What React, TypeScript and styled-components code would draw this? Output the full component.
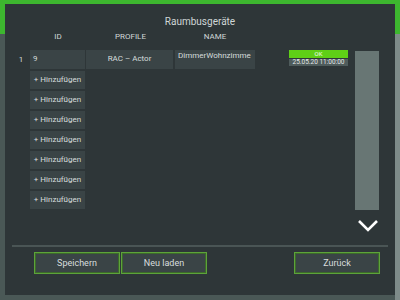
import styled, { createGlobalStyle } from "styled-components"

const GlobalStyle = createGlobalStyle`
    html, body {
        margin: 0;
        padding: 0;
        width: 400px;
        height: 300px;
        overflow: hidden;
        font-family: Roboto, "Liberation Sans", sans-serif;
    }
`

const Page = styled.div`
    position: relative;
    width: 400px;
    height: 300px;
    display: flex;
    flex-direction: column;
    background: #4a5856;
`

const PageHeader = styled.div`
    height: 34px;
    background: #3db72f;
`

const PageBody = styled.div`
    flex: 1;
    display: flex;
    justify-content: flex-end;
`

const PageScroll = styled.div`
    width: 5px;
    background: #7e8b89;
`

const Dialog = styled.div`
    position: absolute;
    left: 5px;
    top: 4px;
    right: 5px;
    bottom: 5px;
    background: #2e3638;
    display: flex;
    flex-direction: column;
    padding: 0 7px;
    color: #d2d9d9;
`

const Title = styled.div`
    margin-top: 11px;
    height: 14px;
    line-height: 14px;
    font-size: 10px;
    text-align: center;
    color: #d0d7d7;
`

const Table = styled.div`
    display: grid;
    grid-template-columns: 18px 56px 89px 80px 34px 59px 7px 24px;
    grid-template-rows: 16px 19px repeat(7, 18px);
    row-gap: 2px;
    margin-top: 3px;
`

const HeadCell = styled.div<{ $col: number }>`
    grid-column: ${p => p.$col};
    grid-row: 1;
    font-size: 8px;
    line-height: 16px;
    text-align: center;
    color: #d0d7d7;
    margin-top: -3px;
`

const RowNum = styled.div`
    grid-column: 1;
    grid-row: 2;
    font-size: 8px;
    line-height: 19px;
    text-align: center;
`

const Cell = styled.div<{ $col: number; $row: number; $w: number; $align?: string; $top?: boolean }>`
    grid-column: ${p => p.$col};
    grid-row: ${p => p.$row};
    width: ${p => p.$w}px;
    background: #3a4446;
    font-size: 8px;
    line-height: ${p => (p.$top ? "12px" : "18px")};
    text-align: ${p => p.$align || "center"};
    padding: 0 3px;
    box-sizing: border-box;
    white-space: nowrap;
    overflow: hidden;
    color: #d6dddd;
`

const Status = styled.div`
    grid-column: 6;
    grid-row: 2;
    display: flex;
    flex-direction: column;
    gap: 1px;
`

const OkBadge = styled.div`
    height: 8px;
    background: #5fcf16;
    color: #f0fff0;
    font-size: 6px;
    line-height: 8px;
    text-align: center;
`

const DateBar = styled.div`
    height: 7px;
    background: #4f5c5c;
    color: #e4eaea;
    font-size: 6.5px;
    line-height: 7px;
    text-align: center;
`

const ScrollTrack = styled.div`
    grid-column: 8;
    grid-row: 2 / span 8;
    margin-top: 1px;
    margin-bottom: -1px;
    background: #687674;
`

const ChevronRow = styled.div`
    display: flex;
    justify-content: flex-end;
    padding-right: 9px;
    margin-top: 10px;
    height: 12px;
`

const Divider = styled.div`
    margin-top: 14px;
    height: 2px;
    background: #4a5555;
`

const ButtonRow = styled.div`
    display: flex;
    margin-top: 5px;
    padding: 0 8px 0 22px;
    gap: 1px;
`

const Button = styled.button<{ $push?: boolean }>`
    width: 86px;
    height: 22px;
    margin-left: ${p => (p.$push ? "auto" : "0")};
    background: #3a4446;
    border: 1px solid #5da33a;
    box-shadow: inset 0 0 0 1px #3c6a2a;
    color: #d8dede;
    font-family: Roboto, "Liberation Sans", sans-serif;
    font-size: 9px;
    padding: 0;
`

function App() {
    const addRows = [3, 4, 5, 6, 7, 8, 9]

    return (
        <>
            <GlobalStyle />
            <Page>
                <PageHeader />
                <PageBody>
                    <PageScroll />
                </PageBody>
                <Dialog>
                    <Title>Raumbusgeräte</Title>
                    <Table>
                        <HeadCell $col={2}>ID</HeadCell>
                        <HeadCell $col={3}>PROFILE</HeadCell>
                        <HeadCell $col={4}>NAME</HeadCell>

                        <RowNum>1</RowNum>
                        <Cell $col={2} $row={2} $w={55} $align="left">9</Cell>
                        <Cell $col={3} $row={2} $w={87}>RAC – Actor</Cell>
                        <Cell $col={4} $row={2} $w={80} $align="left" $top>DimmerWohnzimme</Cell>
                        <Status>
                            <OkBadge>OK</OkBadge>
                            <DateBar>25.05.20 11:00:00</DateBar>
                        </Status>
                        <ScrollTrack />

                        {addRows.map(r => (
                            <Cell key={r} $col={2} $row={r} $w={55}>+ Hinzufügen</Cell>
                        ))}
                    </Table>
                    <ChevronRow>
                        <svg width="22" height="13" viewBox="0 0 22 13">
                            <polyline points="2,2 11,11 20,2" fill="none" stroke="#ffffff" strokeWidth="2.6" />
                        </svg>
                    </ChevronRow>
                    <Divider />
                    <ButtonRow>
                        <Button>Speichern</Button>
                        <Button>Neu laden</Button>
                        <Button $push>Zurück</Button>
                    </ButtonRow>
                </Dialog>
            </Page>
        </>
    )
}

export default App
